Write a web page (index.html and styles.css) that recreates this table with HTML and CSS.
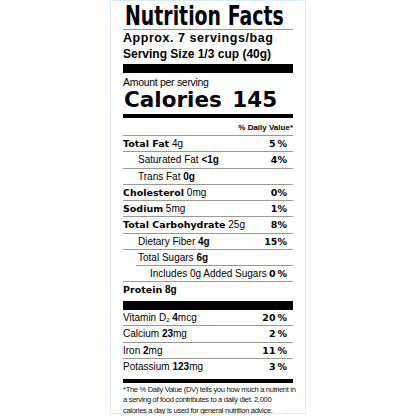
FILE: index.html
```html
<!DOCTYPE html>
<html>
<head>
  <title>Nutrition Facts</title>
  <link rel="stylesheet" href="styles.css">
</head>
<body>
  <div class="label">
    <h1 class="title"><span>Nutrition Facts</span></h1>
    <p class="servings">Approx. 7 servings/bag</p>
    <p class="size">Serving Size 1/3 cup (40g)</p>
    <div class="bar bar-thick"></div>
    <p class="amount">Amount per serving</p>
    <p class="calories">Calories <span class="cal-value">145</span></p>
    <div class="bar bar-medium"></div>
    <p class="dv-head">% Daily Value*</p>

    <ul class="rows">
      <li class="row"><span><span class="nutrient">Total Fat</span> 4g</span><span class="pct">5&thinsp;%</span></li>
      <li class="row sub"><span>Saturated Fat <b>&lt;1g</b></span><span class="pct">4%</span></li>
      <li class="row sub"><span>Trans Fat <b>0g</b></span></li>
      <li class="row"><span><span class="nutrient">Cholesterol</span> 0mg</span><span class="pct">0%</span></li>
      <li class="row"><span><span class="nutrient">Sodium</span> 5mg</span><span class="pct">1%</span></li>
      <li class="row"><span><span class="nutrient">Total Carbohydrate</span> 25g</span><span class="pct">8%</span></li>
      <li class="row sub"><span>Dietary Fiber <b>4g</b></span><span class="pct">15%</span></li>
      <li class="row sub short-line"><span>Total Sugars <b>6g</b></span></li>
      <li class="row sub2"><span>Includes 0g Added Sugars</span><span class="pct">0&thinsp;%</span></li>
      <li class="row last"><span><span class="nutrient">Protein</span> <b>8g</b></span></li>
    </ul>

    <div class="bar bar-thick"></div>

    <ul class="rows">
      <li class="row vit"><span>Vitamin D<sub>2</sub> <b>4</b>mcg</span><span class="pct">20&thinsp;%</span></li>
      <li class="row vit"><span>Calcium <b>23</b>mg</span><span class="pct">2&thinsp;%</span></li>
      <li class="row vit"><span>Iron <b>2</b>mg</span><span class="pct">11&thinsp;%</span></li>
      <li class="row vit last"><span>Potassium <b>123</b>mg</span><span class="pct">3&thinsp;%</span></li>
    </ul>

    <div class="bar bar-medium"></div>

    <p class="footnote">*The % Daily Value (DV) tells you how much a nutrient in<br>a serving of food contributes to a daily diet. 2,000<br>calories a day is used for general nutrition advice.</p>
  </div>
</body>
</html>
```

FILE: styles.css
```css
* {
  box-sizing: border-box;
}

body {
  margin: 0;
  background: #fff;
  color: #000;
  font-family: "Liberation Sans", Arial, sans-serif;
}

p {
  margin: 0;
}

.label {
  width: 196px;
  height: 414px;
  margin: 0 auto;
  padding: 0 12px;
  border: 1px solid #d8edf7;
}

.title {
  margin: 0;
  padding-top: 1px;
  height: 29px;
  line-height: 27px;
  font-family: "DejaVu Sans", sans-serif;
  font-size: 27px;
  font-weight: 700;
  white-space: nowrap;
  border-bottom: 1px solid #999;
}

.title span {
  display: inline-block;
  transform: scaleX(0.7);
  transform-origin: left center;
  margin-left: 2px;
}

.servings,
.size {
  font-weight: 700;
  line-height: 16px;
  white-space: nowrap;
}

.servings {
  font-size: 12.5px;
  letter-spacing: 0.55px;
}

.size {
  font-size: 12px;
}

.bar {
  background: #000;
}

.bar-thick {
  height: 9px;
  margin-top: 2px;
}

.bar-medium {
  height: 4px;
  margin-top: 3px;
}

.amount {
  margin-top: 3px;
  font-size: 10.5px;
  line-height: 12px;
  letter-spacing: -0.3px;
}

.calories {
  margin-top: 1px;
  font-family: "DejaVu Sans", sans-serif;
  font-weight: 700;
  font-size: 21.5px;
  line-height: 22px;
  padding-left: 1px;
}

.cal-value {
  margin-left: 3px;
}

.dv-head {
  padding-top: 4px;
  height: 18px;
  line-height: 12px;
  text-align: right;
  font-size: 8px;
  font-weight: 700;
  border-bottom: 1px solid #999;
}

.rows {
  list-style: none;
  margin: 0;
  padding: 0;
}

.row {
  display: flex;
  justify-content: space-between;
  align-items: baseline;
  height: 16.25px;
  line-height: 15.25px;
  padding-right: 6px;
  font-size: 10px;
  white-space: nowrap;
  border-bottom: 1px solid #999;
}

.row.last {
  border-bottom: 0;
}

.row.sub {
  padding-left: 15px;
}

.row.sub2 {
  padding-left: 27px;
}

.row.short-line {
  border-bottom: 0;
  background: linear-gradient(#999, #999) no-repeat right bottom / calc(100% - 13px) 1px;
}

.row.vit {
  height: 16.5px;
  line-height: 15.5px;
}

.nutrient,
.pct {
  font-family: "DejaVu Sans", sans-serif;
  font-weight: 700;
  font-size: 9.5px;
}

sub {
  font-size: 6px;
  vertical-align: -1px;
}

.footnote {
  padding-top: 2px;
  font-size: 7.6px;
  line-height: 10.5px;
  letter-spacing: -0.33px;
  white-space: nowrap;
  color: #111;
}
```
